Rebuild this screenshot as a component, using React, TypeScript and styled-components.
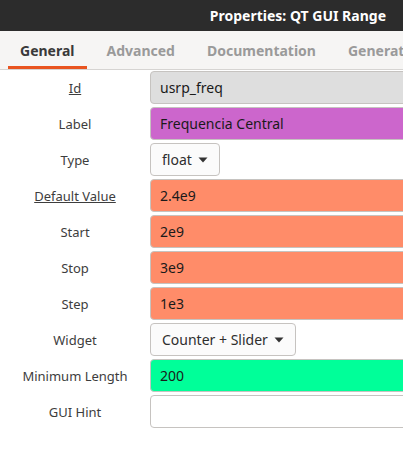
import React from "react";
import styled, { createGlobalStyle } from "styled-components";

const Global = createGlobalStyle`
  html, body { margin: 0; padding: 0; background: #ffffff; overflow: hidden; }
  body { font-family: "Noto Sans", "Open Sans", sans-serif; }
  #root { width: 403px; height: 457px; overflow: hidden; }
`;

const Page = styled.div`
  width: 403px;
  height: 457px;
  overflow: hidden;
  background: #ffffff;
`;

const TitleBar = styled.div`
  height: 31px;
  background: #2c2c2c;
  display: flex;
  align-items: center;
  justify-content: flex-end;
  padding-right: 17px;
  color: #ffffff;
  font-weight: 700;
  font-size: 14px;
  white-space: nowrap;
`;

const TabBar = styled.div`
  height: 38px;
  background: #f6f5f4;
  border-bottom: 1px solid #d6d4d2;
  display: flex;
  align-items: stretch;
  padding-left: 8px;
  gap: 8px;
  white-space: nowrap;
  overflow: hidden;
`;

const Tab = styled.div<{ $active?: boolean }>`
  padding: 0 12px;
  display: flex;
  align-items: center;
  font-size: 14px;
  font-weight: 700;
  color: ${(p) => (p.$active ? "#3a3a3a" : "#9a9a9a")};
  box-shadow: ${(p) => (p.$active ? "inset 0 -3px 0 #e95420" : "none")};
`;

const Form = styled.div`
  width: 460px;
  padding-top: 1px;
  display: grid;
  grid-template-columns: 150px 1fr;
  row-gap: 3px;
`;

const Label = styled.div<{ $underline?: boolean }>`
  height: 33px;
  display: flex;
  align-items: center;
  justify-content: center;
  font-size: 13px;
  color: #3d3d3d;
  text-decoration: ${(p) => (p.$underline ? "underline" : "none")};
  white-space: nowrap;
`;

const Field = styled.div<{ $bg: string }>`
  height: 33px;
  box-sizing: border-box;
  border: 1px solid #c6c3c0;
  border-radius: 4px;
  background: ${(p) => p.$bg};
  display: flex;
  align-items: center;
  padding-left: 9px;
  font-size: 14px;
  color: #1a1a1a;
  white-space: nowrap;
`;

const DropCell = styled.div`
  display: flex;
`;

const Dropdown = styled.div`
  height: 33px;
  box-sizing: border-box;
  border: 1px solid #c6c3c0;
  border-radius: 4px;
  background: #fbfbfb;
  display: flex;
  align-items: center;
  gap: 6px;
  padding: 0 11px;
  font-size: 14px;
  color: #2e2e2e;
  white-space: nowrap;
`;

const Arrow = () => (
  <svg width="10" height="6" viewBox="0 0 10 6">
    <path d="M0.5 0.5 L9.5 0.5 L5 5.5 Z" fill="#333" />
  </svg>
);

type Row =
  | { label: string; value: string; bg: string; underline?: boolean; kind: "field" }
  | { label: string; value: string; kind: "drop" };

const rows: Row[] = [
  { label: "Id", value: "usrp_freq", bg: "#dedede", underline: true, kind: "field" },
  { label: "Label", value: "Frequencia Central", bg: "#cc66cc", kind: "field" },
  { label: "Type", value: "float", kind: "drop" },
  { label: "Default Value", value: "2.4e9", bg: "#ff8c69", underline: true, kind: "field" },
  { label: "Start", value: "2e9", bg: "#ff8c69", kind: "field" },
  { label: "Stop", value: "3e9", bg: "#ff8c69", kind: "field" },
  { label: "Step", value: "1e3", bg: "#ff8c69", kind: "field" },
  { label: "Widget", value: "Counter + Slider", kind: "drop" },
  { label: "Minimum Length", value: "200", bg: "#00ff99", kind: "field" },
  { label: "GUI Hint", value: "", bg: "#ffffff", kind: "field" },
];

export default function App() {
  return (
    <Page>
      <Global />
      <TitleBar>Properties: QT GUI Range</TitleBar>
      <TabBar>
        <Tab $active>General</Tab>
        <Tab>Advanced</Tab>
        <Tab>Documentation</Tab>
        <Tab>Generated Code</Tab>
      </TabBar>
      <Form>
        {rows.map((r) => (
          <React.Fragment key={r.label}>
            <Label $underline={r.kind === "field" && r.underline}>{r.label}</Label>
            {r.kind === "field" ? (
              <Field $bg={r.bg}>{r.value}</Field>
            ) : (
              <DropCell>
                <Dropdown>
                  {r.value}
                  <Arrow />
                </Dropdown>
              </DropCell>
            )}
          </React.Fragment>
        ))}
      </Form>
    </Page>
  );
}
